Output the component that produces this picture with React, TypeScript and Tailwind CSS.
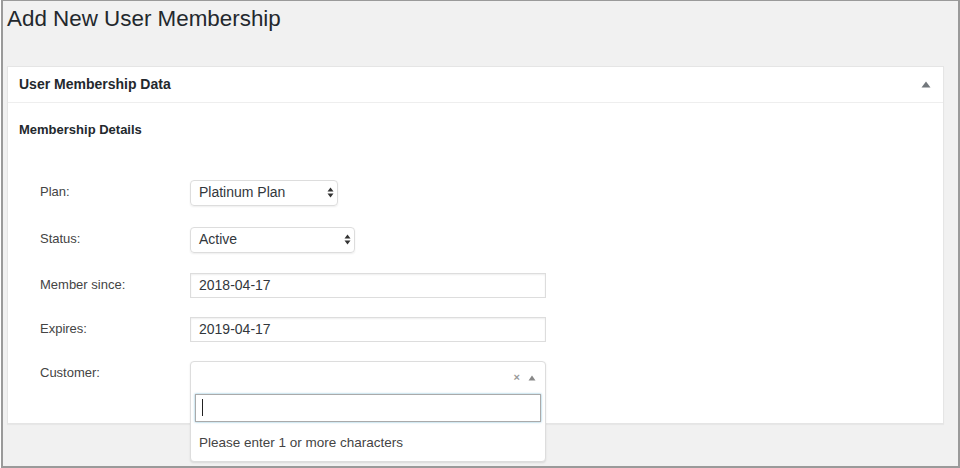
import React from 'react';

const font = { fontFamily: '"Liberation Sans", Arial, sans-serif' };

const Arrows = () => (
  <svg width="7" height="11" viewBox="0 0 7 11" className="text-[#333]">
    <path d="M3.5 0.5 L6.5 4.5 H0.5 Z" fill="currentColor" />
    <path d="M3.5 10.5 L6.5 6.5 H0.5 Z" fill="currentColor" />
  </svg>
);

const Row: React.FC<{ label: string; children: React.ReactNode; h: string }> = ({ label, children, h }) => (
  <div className={`flex ${h}`}>
    <div className="w-[150px] pt-[2px] text-[13px] text-[#444]">{label}</div>
    <div>{children}</div>
  </div>
);

export default function App() {
  return (
    <div className="w-[960px] h-[468px] bg-white" style={font}>
      <div className="w-[959px] h-[468px] border-l-2 border-r-2 border-t border-b-2 border-[#9a9a9a] bg-[#f1f1f1] ml-px overflow-hidden">
        <h1 className="pl-[4px] pt-[6px] text-[22.4px] leading-[24px] font-normal text-[#23282d]">Add New User Membership</h1>

        <div className="mt-[35px] ml-[4px] w-[937px] h-[358px] bg-white border border-[#e5e5e5] shadow-[0_1px_1px_rgba(0,0,0,0.04)]">
          <div className="h-[36px] border-b border-[#eee] flex items-center justify-between pl-[11px] pr-[12px]">
            <span className="text-[14px] font-bold text-[#23282d]">User Membership Data</span>
            <svg width="10" height="7" viewBox="0 0 10 7">
              <path d="M5 0.5 L9.5 6.5 H0.5 Z" fill="#72777c" />
            </svg>
          </div>

          <div className="pl-[11px] pt-[17px] text-[13px] font-bold text-[#23282d]">Membership Details</div>

          <div className="pl-[32px] pt-[40px]">
            <Row label="Plan:" h="h-[47px]">
              <div className="w-[148px] h-[26px] border border-[#ddd] rounded-[4px] shadow-[0_1px_2px_rgba(0,0,0,0.07)] flex items-center justify-between pl-[8px] pr-[3px] text-[14px] text-[#32373c]">
                <span>Platinum Plan</span>
                <Arrows />
              </div>
            </Row>
            <Row label="Status:" h="h-[46px]">
              <div className="w-[165px] h-[26px] border border-[#ddd] rounded-[4px] shadow-[0_1px_2px_rgba(0,0,0,0.07)] flex items-center justify-between pl-[8px] pr-[3px] text-[14px] text-[#32373c]">
                <span>Active</span>
                <Arrows />
              </div>
            </Row>
            <Row label="Member since:" h="h-[44px]">
              <div className="w-[356px] h-[25px] border border-[#ddd] shadow-[inset_0_1px_2px_rgba(0,0,0,0.07)] flex items-center pl-[8px] text-[14px] text-[#32373c]">
                2018-04-17
              </div>
            </Row>
            <Row label="Expires:" h="h-[44px]">
              <div className="w-[356px] h-[25px] border border-[#ddd] shadow-[inset_0_1px_2px_rgba(0,0,0,0.07)] flex items-center pl-[8px] text-[14px] text-[#32373c]">
                2019-04-17
              </div>
            </Row>
            <Row label="Customer:" h="h-[40px]">
              <div className="relative w-[356px] h-[32px]">
                <div className="absolute left-0 top-0 z-10 w-[356px] h-[101px] bg-white border border-[#ddd] rounded-[4px] shadow-[0_1px_2px_rgba(0,0,0,0.1)]">
                  <div className="h-[32px] flex items-center justify-end gap-[8px] pr-[9px]">
                    <span className="text-[11px] font-bold text-[#999] leading-none">×</span>
                    <svg width="8" height="6" viewBox="0 0 8 6">
                      <path d="M4 0.5 L7.5 5.5 H0.5 Z" fill="#888" />
                    </svg>
                  </div>
                  <div className="mx-[4px] h-[28px] border border-[#aaa] shadow-[0_0_2px_rgba(30,140,190,0.6)] flex items-center pl-[6px]">
                    <div className="w-px h-[17px] bg-[#222]" />
                  </div>
                  <div className="pl-[8px] pt-[11px] text-[13.5px] text-[#444]">Please enter 1 or more characters</div>
                </div>
              </div>
            </Row>
          </div>
        </div>
      </div>
    </div>
  );
}
